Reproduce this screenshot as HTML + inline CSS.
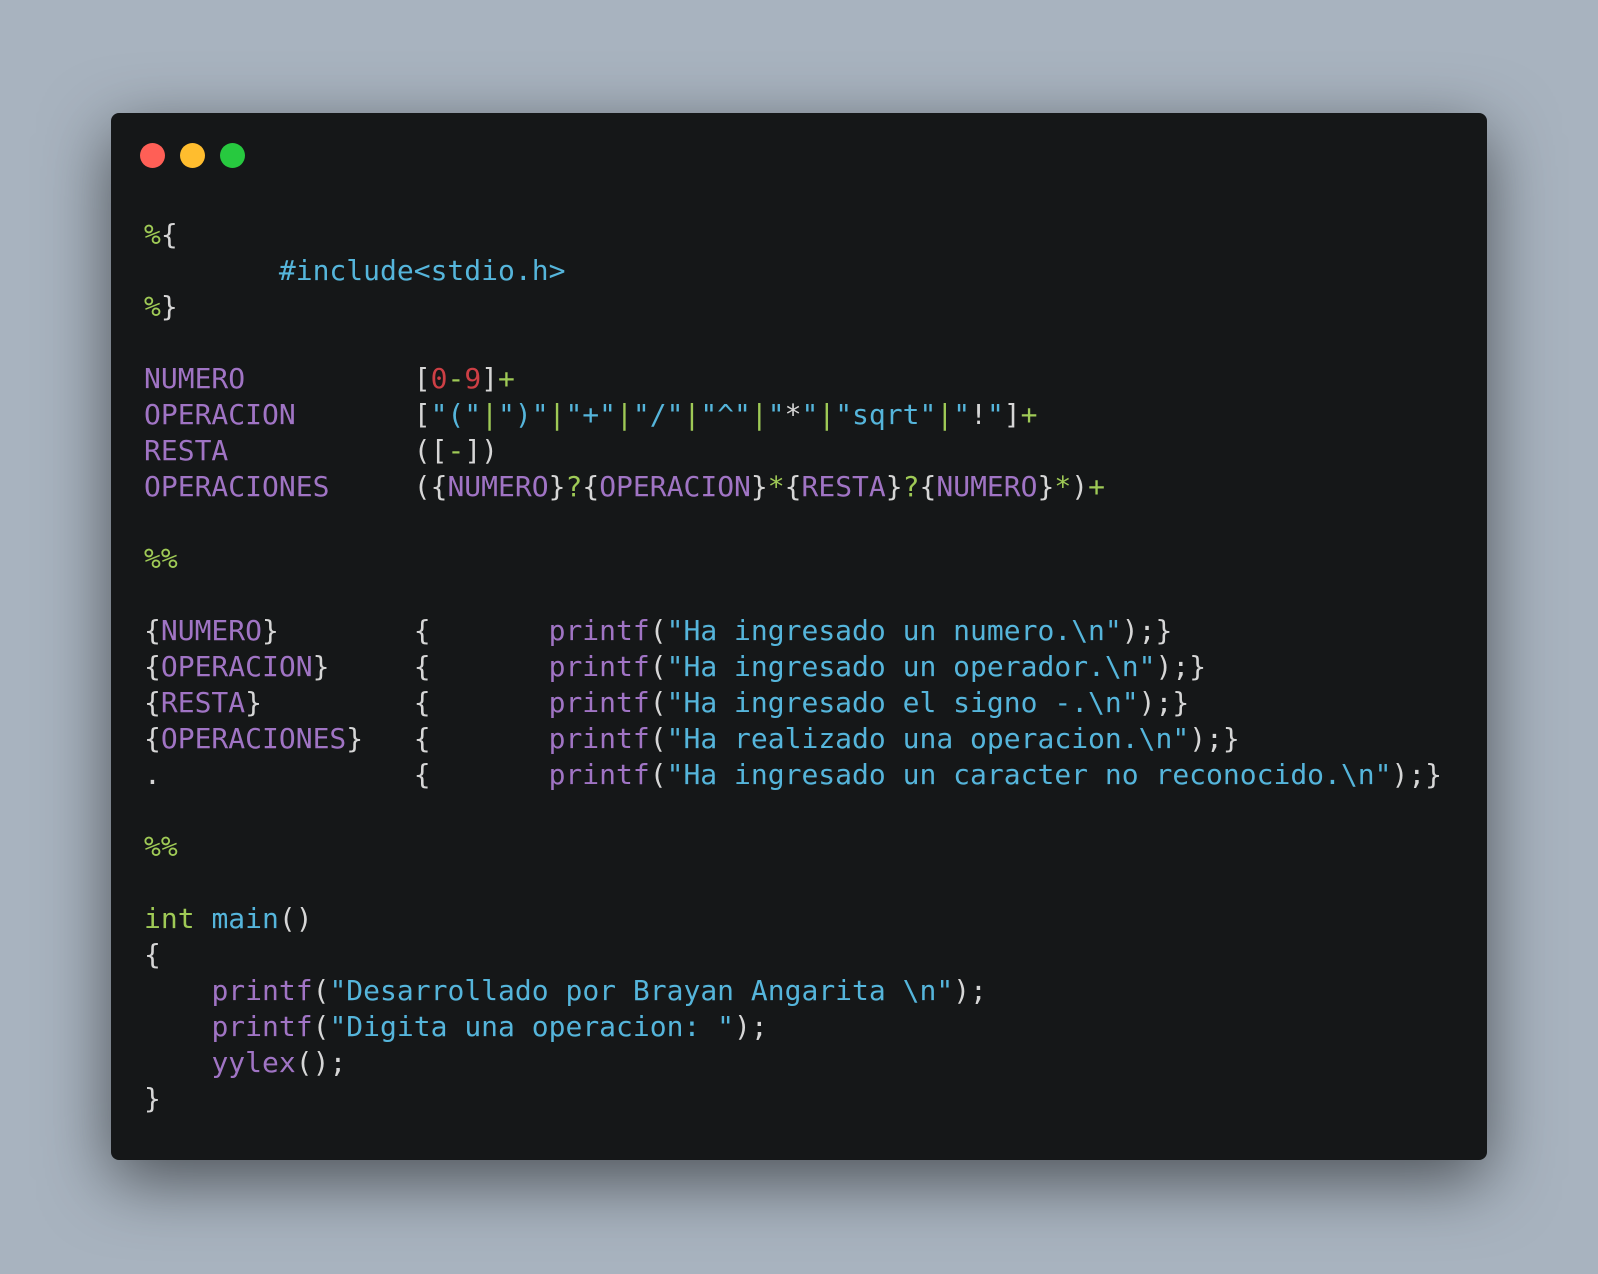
<!DOCTYPE html>
<html><head><meta charset="utf-8"><style>
html,body{margin:0;padding:0;}
body{width:1598px;height:1274px;background:#a8b3bf;position:relative;overflow:hidden;}
.win{position:absolute;left:111px;top:113px;width:1376px;height:1047px;background:#151718;border-radius:8px;box-shadow:0 20px 68px rgba(0,0,0,0.55);}
.dot{position:absolute;top:30px;width:25px;height:25px;border-radius:50%;}
pre{position:absolute;left:33px;top:104px;margin:0;font-family:"DejaVu Sans Mono","Liberation Mono",monospace;font-size:28px;line-height:36px;color:#d6d6d6;tab-size:8;}
.p{color:#a074c4}.c{color:#55b5db}.g{color:#9fca56}.r{color:#cd3f45}
</style></head><body>
<div class="win">
<div class="dot" style="left:29px;background:#ff5f56"></div>
<div class="dot" style="left:69px;background:#ffbd2e"></div>
<div class="dot" style="left:109px;background:#27c93f"></div>
<pre><span class="g">%</span>{
        <span class="c">#include&lt;stdio.h&gt;</span>
<span class="g">%</span>}

<span class="p">NUMERO</span>          [<span class="r">0</span><span class="g">-</span><span class="r">9</span>]<span class="g">+</span>
<span class="p">OPERACION</span>       [<span class="c">"("</span><span class="g">|</span><span class="c">")"</span><span class="g">|</span><span class="c">"+"</span><span class="g">|</span><span class="c">"/"</span><span class="g">|</span><span class="c">"^"</span><span class="g">|</span><span class="c">"</span>*<span class="c">"</span><span class="g">|</span><span class="c">"sqrt"</span><span class="g">|</span><span class="c">"</span>!<span class="c">"</span>]<span class="g">+</span>
<span class="p">RESTA</span>           ([<span class="g">-</span>])
<span class="p">OPERACIONES</span>     ({<span class="p">NUMERO</span>}<span class="g">?</span>{<span class="p">OPERACION</span>}<span class="g">*</span>{<span class="p">RESTA</span>}<span class="g">?</span>{<span class="p">NUMERO</span>}<span class="g">*</span>)<span class="g">+</span>

<span class="g">%%</span>

{<span class="p">NUMERO</span>}        {       <span class="p">printf</span>(<span class="c">"Ha ingresado un numero.\n"</span>);}
{<span class="p">OPERACION</span>}     {       <span class="p">printf</span>(<span class="c">"Ha ingresado un operador.\n"</span>);}
{<span class="p">RESTA</span>}         {       <span class="p">printf</span>(<span class="c">"Ha ingresado el signo -.\n"</span>);}
{<span class="p">OPERACIONES</span>}   {       <span class="p">printf</span>(<span class="c">"Ha realizado una operacion.\n"</span>);}
.               {       <span class="p">printf</span>(<span class="c">"Ha ingresado un caracter no reconocido.\n"</span>);}

<span class="g">%%</span>

<span class="g">int</span> <span class="c">main</span>()
{
    <span class="p">printf</span>(<span class="c">"Desarrollado por Brayan Angarita \n"</span>);
    <span class="p">printf</span>(<span class="c">"Digita una operacion: "</span>);
    <span class="p">yylex</span>();
}</pre>
</div>
</body></html>
